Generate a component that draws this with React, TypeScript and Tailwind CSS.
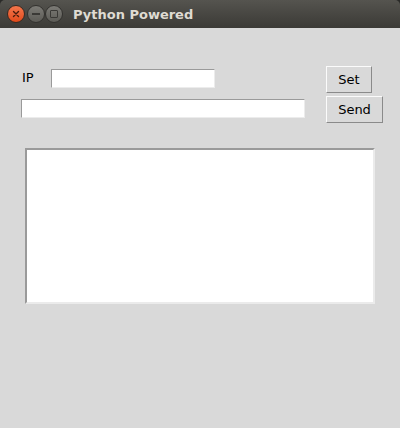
import React from "react";

export default function App() {
  return (
    <div className="w-[400px] h-[428px] bg-[#2a2a28] flex flex-col" style={{ fontFamily: '"DejaVu Sans", sans-serif' }}>
      <div className="h-[28px] shrink-0 rounded-t-[5px] bg-gradient-to-b from-[#55544f] to-[#3b3a36] flex items-center">
        <div className="flex items-center ml-[7px]">
          <div className="w-[18px] h-[18px] rounded-full bg-gradient-to-b from-[#f4764b] to-[#e14a19] border border-[#3a2a22] flex items-center justify-center">
            <svg width="8" height="8" viewBox="0 0 8 8">
              <path d="M1.5 1.5 L6.5 6.5 M6.5 1.5 L1.5 6.5" stroke="#4a1c0c" strokeWidth="1.4" strokeLinecap="round" />
            </svg>
          </div>
          <div className="ml-[2px] w-[18px] h-[18px] rounded-full bg-gradient-to-b from-[#7c7b76] to-[#5c5b56] border border-[#33322f] flex items-center justify-center">
            <div className="w-[8px] h-[2px] bg-[#3a3936]" />
          </div>
          <div className="w-[18px] h-[18px] rounded-full bg-gradient-to-b from-[#7c7b76] to-[#5c5b56] border border-[#33322f] flex items-center justify-center">
            <div className="w-[8px] h-[8px] border-[1.5px] border-[#3a3936] rounded-[1px]" />
          </div>
        </div>
        <div className="ml-[10px] text-[13px] font-bold text-[#dfdbd2] leading-none">Python Powered</div>
      </div>
      <div className="flex-1 bg-[#d9d9d9] pt-[38px] pl-[21px]">
        <div className="flex h-[27px]">
          <div className="w-[305px] flex items-start">
            <span className="ml-[1px] w-[29px] mt-[4px] text-[13px] leading-[16px] text-black">IP</span>
            <div className="mt-[3px] w-[164px] h-[19px] bg-white border-t border-l border-t-[#9a9a9a] border-l-[#9a9a9a] border-b border-r border-b-[#ececec] border-r-[#ececec]" />
          </div>
          <div className="w-[46px] h-[27px] bg-[#d9d9d9] border border-t-[#fbfbfb] border-l-[#fbfbfb] border-b-[#8a8a8a] border-r-[#8a8a8a] flex items-center justify-center text-[13px] text-black">
            Set
          </div>
        </div>
        <div className="flex h-[27px] mt-[3px]">
          <div className="w-[305px] flex items-start">
            <div className="mt-[3px] w-[284px] h-[19px] bg-white border-t border-l border-t-[#9a9a9a] border-l-[#9a9a9a] border-b border-r border-b-[#ececec] border-r-[#ececec]" />
          </div>
          <div className="w-[57px] h-[27px] bg-[#d9d9d9] border border-t-[#fbfbfb] border-l-[#fbfbfb] border-b-[#8a8a8a] border-r-[#8a8a8a] flex items-center justify-center text-[13px] text-black">
            Send
          </div>
        </div>
        <div className="mt-[25px] ml-[4px] w-[350px] h-[156px] bg-white border-2 border-t-[#9a9a9a] border-l-[#9a9a9a] border-b-[#ebebeb] border-r-[#ebebeb]" />
      </div>
    </div>
  );
}
